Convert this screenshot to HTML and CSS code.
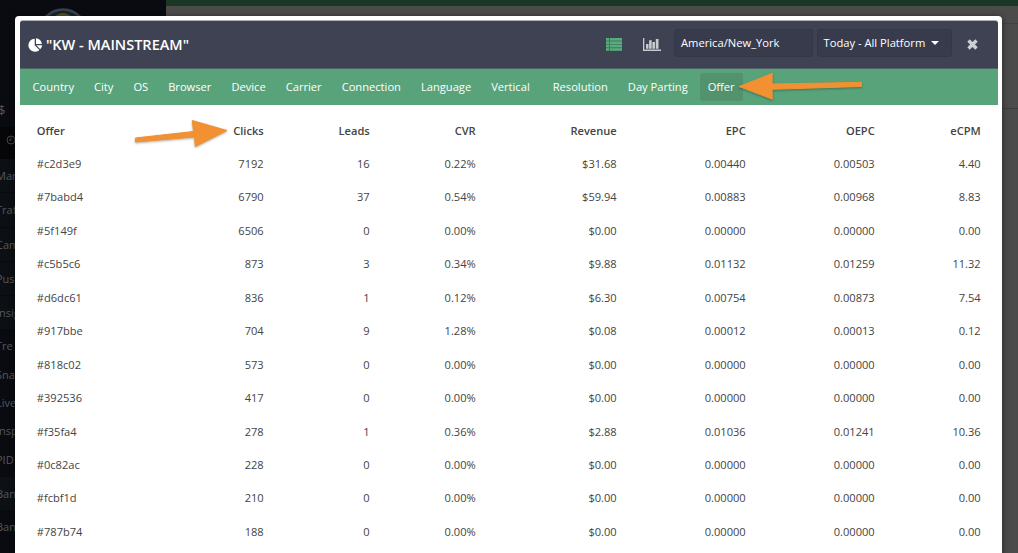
FILE: index.html
```
<!DOCTYPE html>
<html lang="en">
<head>
<meta charset="utf-8">
<title>KW - MAINSTREAM</title>
<link rel="stylesheet" href="styles.css">
</head>
<body>
<div class="page">
  <aside class="sidebar">
    <div class="profile">
      <svg class="avatar" width="50" height="50" viewBox="0 0 50 50"><circle cx="25" cy="25" r="23.5" fill="#102536" stroke="#3e4247" stroke-width="2.6"/><path d="M16 9Q25 1 34 9Z" fill="#5e5112"/></svg>
    </div>
    <div class="balance">$</div>
    <div class="clock"><svg width="10" height="10" viewBox="0 0 10 10" fill="none" stroke="#45474b"><circle cx="5" cy="5" r="4"/><path d="M5 2.5V5.3H3"/></svg></div>
    <div class="item">Man</div>
    <div class="item">Traf</div>
    <div class="item">Cam</div>
    <div class="item">Pus</div>
    <div class="item insights">Insig</div>
    <div class="sub">Tre</div>
    <div class="sub">Sna</div>
    <div class="sub">Live</div>
    <div class="sub">Insp</div>
    <div class="sub">PID</div>
    <div class="item lit">Ban</div>
    <div class="item plain">Ban</div>
  </aside>
  <main class="backdrop"><div class="topbar"></div><div class="panel"></div><div class="panel-body"></div></main>
</div>

<section class="modal">
  <header class="head">
    <svg class="pie" width="15" height="14" viewBox="0 0 15 14" fill="#fff"><path d="M6.7.7V7.2L11.4 11.9A6.5 6.5 0 1 1 6.7.7Z"/><path d="M8 .2A6.2 6.2 0 0 1 13.8 6H8Z"/><path d="M8.3 7.2H14.2A6.4 6.4 0 0 1 12.3 11.2Z"/></svg>
    <h1>"KW - MAINSTREAM"</h1>
    <svg class="list" width="16" height="13" viewBox="0 0 16 13" fill="#55ad7b"><path d="M0 0H3V2.5H0ZM4 0H16V2.5H4ZM0 3.4H3V5.9H0ZM4 3.4H16V5.9H4ZM0 6.8H3V9.3H0ZM4 6.8H16V9.3H4ZM0 10.2H3V12.7H0ZM4 10.2H16V12.7H4Z"/><path d="M0 0H16V12.7H0Z" opacity=".45"/></svg>
    <svg class="chart" width="18" height="13" viewBox="0 0 18 13" fill="#c9cad0"><path d="M0 0H1.3V11.4H18V12.9H0ZM3 6H5.5V10.8H3ZM6.1 2.2H8.7V10.8H6.1ZM9.4 4H12V10.8H9.4ZM12.8 1H15.5V10.8H12.8Z"/></svg>
    <div class="field zone">America/New_York</div>
    <div class="field range">Today - All Platform <i class="caret"></i></div>
    <svg class="close" width="11" height="11" viewBox="0 0 11 11"><path d="M1.5 1.5L9.5 9.5M9.5 1.5L1.5 9.5" stroke="#cdced3" stroke-width="3.4"/></svg>
  </header>
  <nav class="tabs">
    <a>Country</a><a>City</a><a>OS</a><a>Browser</a><a>Device</a><a>Carrier</a><a>Connection</a><a>Language</a><a>Vertical</a><a class="spaced">Resolution</a><a>Day Parting</a><a class="active">Offer</a>
  </nav>
  <table class="data">
    <colgroup><col class="c1"><col class="c2"><col class="c3"><col class="c4"><col class="c5"><col class="c6"><col class="c7"><col class="c8"></colgroup>
    <thead><tr><th>Offer</th><th>Clicks</th><th>Leads</th><th>CVR</th><th>Revenue</th><th>EPC</th><th>OEPC</th><th>eCPM</th></tr></thead>
    <tbody>
      <tr><td>#c2d3e9</td><td>7192</td><td>16</td><td>0.22%</td><td>$31.68</td><td>0.00440</td><td>0.00503</td><td>4.40</td></tr>
      <tr><td>#7babd4</td><td>6790</td><td>37</td><td>0.54%</td><td>$59.94</td><td>0.00883</td><td>0.00968</td><td>8.83</td></tr>
      <tr><td>#5f149f</td><td>6506</td><td>0</td><td>0.00%</td><td>$0.00</td><td>0.00000</td><td>0.00000</td><td>0.00</td></tr>
      <tr><td>#c5b5c6</td><td>873</td><td>3</td><td>0.34%</td><td>$9.88</td><td>0.01132</td><td>0.01259</td><td>11.32</td></tr>
      <tr><td>#d6dc61</td><td>836</td><td>1</td><td>0.12%</td><td>$6.30</td><td>0.00754</td><td>0.00873</td><td>7.54</td></tr>
      <tr><td>#917bbe</td><td>704</td><td>9</td><td>1.28%</td><td>$0.08</td><td>0.00012</td><td>0.00013</td><td>0.12</td></tr>
      <tr><td>#818c02</td><td>573</td><td>0</td><td>0.00%</td><td>$0.00</td><td>0.00000</td><td>0.00000</td><td>0.00</td></tr>
      <tr><td>#392536</td><td>417</td><td>0</td><td>0.00%</td><td>$0.00</td><td>0.00000</td><td>0.00000</td><td>0.00</td></tr>
      <tr><td>#f35fa4</td><td>278</td><td>1</td><td>0.36%</td><td>$2.88</td><td>0.01036</td><td>0.01241</td><td>10.36</td></tr>
      <tr><td>#0c82ac</td><td>228</td><td>0</td><td>0.00%</td><td>$0.00</td><td>0.00000</td><td>0.00000</td><td>0.00</td></tr>
      <tr><td>#fcbf1d</td><td>210</td><td>0</td><td>0.00%</td><td>$0.00</td><td>0.00000</td><td>0.00000</td><td>0.00</td></tr>
      <tr><td>#787b74</td><td>188</td><td>0</td><td>0.00%</td><td>$0.00</td><td>0.00000</td><td>0.00000</td><td>0.00</td></tr>
    </tbody>
  </table>
</section>
<svg class="arrows" width="1018" height="553" viewBox="0 0 1018 553" fill="#f19132" stroke="#f19132" stroke-linejoin="round">
  <path d="M135.5 138L193.5 131.5L192.3 120.5L227 130.5L195.3 146.5L194.5 137L135.5 142Z"/>
  <path d="M861.5 82.3L772 84L772.3 73.3L739 86.5L772.3 99.2L772 89.3L861.5 86.5Z"/>
</svg>
</body>
</html>
```
FILE: styles.css
```
* { box-sizing: border-box; }
body { margin: 0; width: 1018px; height: 553px; overflow: hidden; position: relative; font-family: "Open Sans", "Noto Sans", sans-serif; font-size: 11.1px; color: #444; background: #0a0c11; }
.page { display: flex; height: 553px; overflow: hidden; }
.sidebar { width: 166px; flex: none; overflow: hidden; background: #090b11; color: #56585c; font-size: 11px; }
.profile { height: 93px; padding: 8px 0 0 38px; }
.avatar { display: block; }
.balance { height: 34px; line-height: 34px; font-size: 13px; margin-left: -2px; }
.clock { height: 32px; padding: 8px 0 0 6px; background: #060608; }
.clock svg { display: block; }
.item { height: 34.3px; line-height: 33px; text-indent: -4px; background: #0c0f14; border-bottom: 1px solid #080a0e; }
.insights { margin-bottom: 2px; }
.sub { height: 28.3px; line-height: 28px; text-indent: -4px; }
.lit { margin-top: 3px; background: #0d1115; }
.plain { background: #090b11; line-height: 31px; }
.backdrop { flex: 1; background: #4b4b4b; display: flex; flex-direction: column; }
.topbar { height: 6px; background: #1a3726; }
.panel { height: 18px; border-bottom: 1px solid #414141; }
.panel-body { height: 85px; border-bottom: 1px solid #3c3c3c; }
.modal { position: absolute; left: 15px; top: 16px; width: 987px; height: 560px; padding: 4px 4px 0 5px; background: #fff; border-radius: 4px 4px 0 0; box-shadow: 0 1px 6px rgba(0,0,0,.5); }
.head { display: flex; align-items: center; height: 49px; padding-left: 8px; background: #3f4253; border-top: 1px solid #aeb2b8; border-bottom: 1px solid #4d6364; border-radius: 3px 3px 0 0; color: #fff; }
.head svg { flex: none; }
.head h1 { margin: 0 0 0 3px; width: 560px; font-size: 14.5px; line-height: 20px; font-weight: 600; white-space: nowrap; }
.chart { margin-left: 21px; }
.field { height: 28px; line-height: 26px; padding-left: 6px; margin-top: -3px; border: 1px solid #343746; border-radius: 3px; background: #383b4b; white-space: nowrap; font-size: 11.2px; }
.zone { width: 139px; margin-left: 13px; }
.range { width: 135px; margin-left: 3.5px; }
.caret { display: inline-block; margin-left: 3px; vertical-align: 2px; border: 4px solid transparent; border-top-color: #fff; border-bottom: 0; }
.close { margin-left: 15px; }
.tabs { display: flex; gap: 4px; height: 36px; padding: 4px 0 0 4.5px; background: #59a37b; color: #fff; font-size: 11.15px; }
.tabs a { height: 28px; line-height: 27px; padding: 0 8px; border-radius: 3px; white-space: nowrap; }
.tabs .spaced { margin-left: 3px; }
.tabs .active { background: #52926d; }
.data { width: 978px; margin-top: 8.4px; table-layout: fixed; border-collapse: collapse; }
.data tr { height: 33.45px; }
.data th, .data td { padding: 0 17.3px 0 0; text-align: right; line-height: 15px; }
.data th { font-weight: 600; }
.data th:first-child, .data td:first-child { padding-left: 16.8px; text-align: left; }
.c1 { width: 130px; }
.c2 { width: 131px; }
.c3, .c4, .c8 { width: 106px; }
.c5 { width: 141px; }
.c6, .c7 { width: 129px; }
.arrows { position: absolute; left: 0; top: 0; filter: drop-shadow(0 1px 1px rgba(0,0,0,.3)); }
```
